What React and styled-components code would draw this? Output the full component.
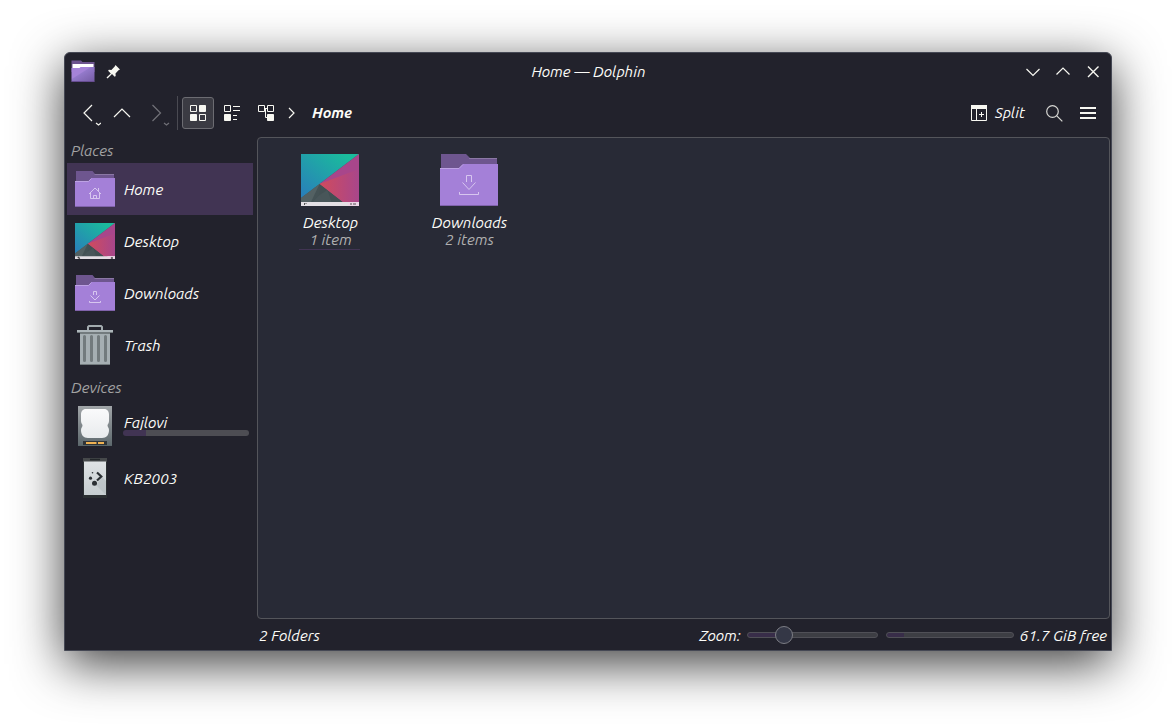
import React from 'react';
import styled, { createGlobalStyle } from 'styled-components';

const GlobalStyle = createGlobalStyle`
  * {
    box-sizing: border-box;
  }

  body {
    margin: 0;
    background: #fff;
    color: #f8f8f2;
    font: italic 15.33px/18px Ubuntu, 'Noto Sans', sans-serif;
    white-space: nowrap;
    overflow: hidden;
  }

  svg {
    display: block;
    flex: none;
  }
`;

const Desktop = styled.div`
  height: 727px;
  padding: 52px 64px 76px;
`;

const Window = styled.div`
  display: flex;
  flex-direction: column;
  height: 599px;
  border: 1px solid #454854;
  border-radius: 6px 6px 0 0;
  background: #22222c;
  box-shadow: 0 13px 50px rgba(0, 0, 0, 0.76);
`;

const TitleBar = styled.header`
  display: grid;
  grid-template-columns: 1fr auto 1fr;
  align-items: center;
  height: 38px;
  padding: 0 10px 0 6px;
`;

const TitleGroup = styled.div`
  display: flex;
  align-items: center;
  justify-content: ${props => (props.$end ? 'flex-end' : 'flex-start')};
  gap: ${props => (props.$end ? 14 : 11)}px;
`;

const Text = styled.span`
  font-weight: ${props => (props.$bold ? 700 : 400)};
  color: ${props => (props.$muted ? '#a3a3a3' : '#fcfcf8')};
`;

const Title = styled(Text)`
  padding-left: 5px;
`;

const ToolBar = styled.nav`
  display: flex;
  align-items: center;
  height: 44px;
  padding: 0 6px 0 7px;
`;

const ToolButton = styled.div`
  display: flex;
  align-items: center;
  justify-content: center;
  width: ${props => props.$width || 34}px;
  height: 32px;
  border: 1px solid ${props => (props.$active ? '#6c6c72' : 'transparent')};
  border-radius: 3px;
  background: ${props => (props.$active ? '#3b3b43' : 'transparent')};
`;

const Divider = styled.div`
  width: 1px;
  height: 34px;
  margin: 0 4px 0 0;
  background: #4a4a52;
`;

const Location = styled(Text)`
  margin-left: 12px;
  font-size: 15px;
`;

const Spacer = styled.div`
  flex: 1;
`;

const Split = styled.div`
  display: flex;
  align-items: center;
  gap: 8px;
  margin-right: 12px;
`;

const Body = styled.div`
  display: flex;
  flex: 1;
  min-height: 0;
  padding-top: 2px;
`;

const Sidebar = styled.aside`
  width: 192px;
  padding: 5px 4px 0 2px;
`;

const Section = styled.div`
  height: ${props => props.$height}px;
  padding: ${props => props.$top}px 0 0 4px;
`;

const Place = styled.div`
  display: flex;
  align-items: center;
  gap: 9px;
  height: 52px;
  padding: 0 4px 0 8px;
  background: ${props => (props.$selected ? '#413453' : 'transparent')};
`;

const PlaceLabel = styled.div`
  display: flex;
  flex: 1;
  flex-direction: column;
  padding: ${props => (props.$raised ? '0 0 3px' : '2px 0 0')};
`;

const Capacity = styled.div`
  height: 6px;
  margin: -2px 0 -1px -1px;
  border-radius: 3px;
  background: linear-gradient(90deg, #413453 23px, #4d4d53 23px);
`;

const Main = styled.main`
  flex: 1;
  margin-right: 1px;
`;

const FileView = styled.section`
  display: flex;
  align-items: flex-start;
  height: 482px;
  padding: 16px 2px;
  border: 1px solid #54555b;
  border-radius: 4px;
  background: #282a36;
`;

const File = styled.div`
  display: flex;
  flex-direction: column;
  align-items: center;
  width: 139px;
`;

const FileName = styled.div`
  height: 17px;
  margin-top: 8px;
  padding-left: 2px;
`;

const FileInfo = styled.div`
  min-width: 61px;
  height: 19px;
  padding-left: 2px;
  text-align: center;
  border-bottom: 1px solid ${props => (props.$current ? '#413453' : 'transparent')};

  ${Text} {
    color: #b0b0b0;
  }
`;

const StatusBar = styled.footer`
  display: flex;
  align-items: center;
  height: 32px;
  padding: 0 3px 0 2px;
`;

const StatusText = styled(Text)`
  padding-top: 2px;
`;

const Slider = styled.div`
  display: flex;
  align-items: center;
  width: 131px;
  height: 6px;
  margin: 0 8px 0 6px;
  border: 1px solid #505057;
  border-radius: 3px;
  background: linear-gradient(90deg, #382d49 35px, #3d3e44 35px);
`;

const Handle = styled.div`
  width: 18px;
  height: 18px;
  margin-left: 27px;
  border: 1px solid #7c7d84;
  border-radius: 50%;
  background: #343746;
`;

const FreeSpace = styled.div`
  width: 128px;
  height: 6px;
  margin-right: 6px;
  border: 1px solid #505057;
  border-radius: 3px;
  background: linear-gradient(90deg, #382d49 17px, #3d3e44 17px);
`;

const Line = ({ w, h, d, color = '#f8f8f2', stroke = 1.2 }) => (
  <svg width={w} height={h} viewBox={`0 0 ${w} ${h}`} fill="none" stroke={color} strokeWidth={stroke}>
    <path d={d} />
  </svg>
);

const AppIcon = () => (
  <svg width="24" height="24" viewBox="0 0 24 24">
    <defs>
      <linearGradient id="app" x2="1" y2="1">
        <stop stopColor="#a583d8" />
        <stop offset=".4" stopColor="#a583d8" />
        <stop offset=".44" stopColor="#9379ca" />
        <stop offset="1" stopColor="#755ca4" />
      </linearGradient>
    </defs>
    <path d="M.5 0.500H10l1.500 1.500h12v10H.5z" fill="#6d548f" />
    <path d="M1.500 4h21v6h-21z" fill="#fff" />
    <path d="M.5 8h8l1-1h14v14.500H.5z" fill="url(#app)" />
    <path d="M.5 21.500h23" stroke="#674d91" />
  </svg>
);

const PinIcon = () => (
  <svg width="14" height="14" viewBox="0 0 14 14">
    <path
      d="M9.500 0L14 4.500l-1.500.8-3 3.200.2 2.500-1 .8-2.700-2.700-4.500 4.400-1-1 4.300-4L2.100 5.800l.8-1 2.500.2L8.700 1.500z"
      fill="#f8f8f2"
    />
  </svg>
);

const Folder = ({ large, glyph }) => {
  if (large) {
    return (
      <svg width="58" height="52" viewBox="0 0 58 52" fill="none">
        <path d="M1 0h25l4 4h27v12H1z" fill="#6e568f" />
        <path d="M29 4.500h28" stroke="#8b78a5" />
        <path d="M0 14h19l4-4h35v42H0z" fill="#a480d8" />
        <path d="M0 14.500h19l4-4" stroke="#bda2e4" />
        <path d="M0 51.500h58" stroke="#8063ab" />
        <path
          d="M26.500 28v-6.500h5V28M22.500 28.500l6.500 7 6.500-7M19.500 38v2.500h19V38"
          stroke="#d7c6ef"
        />
      </svg>
    );
  }
  return (
    <svg width="40" height="36" viewBox="0 0 40 36" fill="none">
      <path d="M1 0h16.500L20 3h19v8H1z" fill="#6e568f" />
      <path d="M19.500 3.500H39" stroke="#8b78a5" />
      <path d="M0 10h13.500l3-3H40v29H0z" fill="#a480d8" />
      <path d="M0 10.500h13.500l3-3" stroke="#bda2e4" />
      <path d="M0 35.500h40" stroke="#8063ab" />
      {glyph === 'home' ? (
        <path d="M14 23l6-6 6 6M15.500 22v5.500h9V22M18.500 27.500v-3h3v3M23.500 17v3" stroke="#d7c6ef" />
      ) : (
        <path d="M18.500 20v-3.500h3V20M15.500 20.500l4.500 4.500 4.500-4.500M14.500 26v1.500h11V26" stroke="#d7c6ef" />
      )}
    </svg>
  );
};

const Wallpaper = ({ width, height }) => (
  <svg width={width} height={height} viewBox="0 0 58 52" preserveAspectRatio="none">
    <defs>
      <linearGradient id="sky" x1="0" y1=".9" x2=".85" y2=".1">
        <stop stopColor="#2980b9" />
        <stop offset="1" stopColor="#1abc9c" />
      </linearGradient>
      <linearGradient id="red">
        <stop stopColor="#d14b5c" />
        <stop offset="1" stopColor="#a8468b" />
      </linearGradient>
    </defs>
    <path d="M0 0h58v52H0z" fill="#445255" />
    <path d="M0 0h58L18.500 30 0 44z" fill="url(#sky)" />
    <path d="M58 0v52H47L18.500 30z" fill="#a8468b" />
    <path d="M58 15v37H47L18.500 30z" fill="url(#red)" />
    <path d="M18.500 30L0 44v4h10z" fill="#536163" />
    <path d="M18.500 30v11l6 7h17z" fill="#425053" />
    <path d="M18.500 41l8-5 4 12H12z" fill="#4d5a5d" opacity=".6" />
    <path d="M0 48h58v4H0z" fill="#e3dfe4" />
    <path d="M47 48h11v4H47z" fill="#ecd6e6" />
    {width > 40 ? (
      <path d="M3.500 49v2M5 49v1M49 50h2M52 50h3" fill="none" stroke="#555" />
    ) : (
      <path d="M4 49l3 2.500M52 50.500h3" fill="none" stroke="#444" strokeWidth="2" />
    )}
  </svg>
);

const TrashIcon = () => (
  <svg width="40" height="40" viewBox="0 0 40 40" fill="none">
    <path d="M13 6V2l1-1h12l1 1v4" stroke="#a2abaf" strokeWidth="2" />
    <path d="M5 8h30v32H5z" fill="#a5aeb2" />
    <path d="M5 8.500h30M5 39.500h30" stroke="#737b7e" />
    <path d="M2 5h36v2H2z" fill="#adb6ba" />
    <path d="M2 7.500h36" stroke="#727a7d" />
    <path
      d="M9.500 11.500v24M16.500 11.500v24M23.500 11.500v24M30.500 11.500v24"
      stroke="#727a7d"
      strokeWidth="3"
      strokeLinecap="round"
    />
  </svg>
);

const DiskIcon = () => (
  <svg width="40" height="40" viewBox="0 0 40 40">
    <defs>
      <linearGradient id="metal" x2="0" y2="1">
        <stop stopColor="#a1a5a8" />
        <stop offset="1" stopColor="#5d686c" />
      </linearGradient>
      <linearGradient id="plate" x2="0" y2="1">
        <stop stopColor="#fafafb" />
        <stop offset="1" stopColor="#e8ebed" />
      </linearGradient>
    </defs>
    <path d="M3 0h34v40H3z" fill="url(#metal)" />
    <path
      d="M11 3h18c3.500 0 5 2.500 5 5.500V15c0 2.500-1.500 3-1.500 4.500S34 21.500 34 24c0 5-2.500 8-7 8H13c-4.500 0-7-3-7-8 0-2.500 1.500-3 1.500-4.500S6 17.500 6 15V8.500C6 5.500 7.500 3 11 3z"
      fill="url(#plate)"
    />
    <path d="M8 35h24v4H8z" fill="#2f3438" />
    <path d="M11 37h10.500M23 37h6" stroke="#f0b252" strokeWidth="1.800" />
    <path d="M3 39.500h34" stroke="#59666a" />
  </svg>
);

const PhoneIcon = () => (
  <svg width="40" height="40" viewBox="0 0 40 40">
    <defs>
      <linearGradient id="screen" x2="0" y2="1">
        <stop stopColor="#dfe3e5" />
        <stop offset="1" stopColor="#c6cdd0" />
      </linearGradient>
    </defs>
    <path d="M8 0h24v40H8z" fill="#2b2f32" />
    <path d="M8 0h24v4H8z" fill="#46494b" />
    <path d="M15 1.500h10" stroke="#222629" strokeWidth="1.500" />
    <path d="M9 3.500h22V37H9z" fill="url(#screen)" />
    <path d="M21 27l9 9h1V23l-4-4z" fill="#b3babe" opacity=".6" />
    <circle cx="15.500" cy="20.200" r="1.600" fill="#2b3034" />
    <circle cx="19.500" cy="25.300" r="2.500" fill="#2b3034" />
    <circle cx="17.500" cy="14.800" r=".8" fill="#2b3034" />
    <path d="M22 14.500l4.300 4-4.300 4" fill="none" stroke="#2b3034" strokeWidth="2.200" />
  </svg>
);

const GridIcon = () => (
  <svg width="16" height="16" viewBox="0 0 16 16" fill="none" stroke="#f8f8f2">
    <path d="M.5.5h6v6h-6zM9.500 9.500h6v6h-6z" />
    <path d="M9.500.5h6v6h-6zM.5 9.500h6v6h-6z" fill="#f8f8f2" />
  </svg>
);

const DetailsIcon = () => (
  <svg width="16" height="16" viewBox="0 0 16 16" fill="none" stroke="#f8f8f2">
    <path d="M.5.5h6v6h-6zM9 1.500h7M9 5.500h7M9 10.500h4M9 14.500h4" />
    <path d="M.5 9.500h6v6h-6z" fill="#f8f8f2" />
  </svg>
);

const TreeIcon = () => (
  <svg width="16" height="16" viewBox="0 0 16 16" fill="none" stroke="#f8f8f2">
    <path d="M.5.5h6v6h-6zM9.500.5h6v6h-6zM6 3.500h4M7.500 3v9.500H10" />
    <path d="M9.500 9.500h6v6h-6z" fill="#f8f8f2" />
  </svg>
);

const SplitIcon = () => (
  <svg width="16" height="16" viewBox="0 0 16 16" fill="none" stroke="#f8f8f2">
    <path d="M.5.5h15v15H.5zM5.500 3v13M8 9.500h5M10.500 7v5" />
    <path d="M0 0h16v4H0z" fill="#f8f8f2" stroke="none" />
  </svg>
);

const SearchIcon = () => (
  <svg width="17" height="17" viewBox="0 0 17 17" fill="none" stroke="#d8d8d4" strokeWidth="1.200">
    <circle cx="6.500" cy="6.500" r="5.800" />
    <path d="M10.800 10.800l5.500 5.500" />
  </svg>
);

const places = [
  { name: 'Home', icon: <Folder glyph="home" />, selected: true },
  { name: 'Desktop', icon: <Wallpaper width={40} height={36} /> },
  { name: 'Downloads', icon: <Folder /> },
  { name: 'Trash', icon: <TrashIcon /> },
];

const devices = [
  { name: 'Fajlovi', icon: <DiskIcon />, capacity: true },
  { name: 'KB2003', icon: <PhoneIcon /> },
];

const PlaceRow = ({ name, icon, selected, capacity }) => (
  <Place $selected={selected}>
    {icon}
    <PlaceLabel $raised={capacity}>
      <Text>{name}</Text>
      {capacity && <Capacity />}
    </PlaceLabel>
  </Place>
);

const App = () => (
  <Desktop>
    <GlobalStyle />
    <Window>
      <TitleBar>
        <TitleGroup>
          <AppIcon />
          <PinIcon />
        </TitleGroup>
        <Title>Home — Dolphin</Title>
        <TitleGroup $end>
          <Line w={16} h={16} d="M1.500 5l6.500 6.500L14.500 5" />
          <Line w={16} h={16} d="M1.500 10.500L8 4l6.500 6.500" />
          <Line w={16} h={16} d="M3 2.500l10.500 10.500M13.500 2.500L3 13" stroke={1.4} />
        </TitleGroup>
      </TitleBar>
      <ToolBar>
        <ToolButton>
          <Line w={24} h={28} d="M15 6l-8 8 8 8M19 24l2.500 2 2.500-2" />
        </ToolButton>
        <ToolButton $width={32}>
          <Line w={18} h={18} d="M1 13l8-8 8 8" />
        </ToolButton>
        <ToolButton $width={39}>
          <Line w={24} h={28} d="M6.500 6l8 8-8 8M18 24l2.500 2 2.500-2" color="#717178" />
        </ToolButton>
        <Divider />
        <ToolButton $width={32} $active>
          <GridIcon />
        </ToolButton>
        <ToolButton $width={36}>
          <DetailsIcon />
        </ToolButton>
        <ToolButton $width={32}>
          <TreeIcon />
        </ToolButton>
        <ToolButton $width={18}>
          <Line w={8} h={12} d="M2 1l5 5-5 5" />
        </ToolButton>
        <Location $bold>Home</Location>
        <Spacer />
        <Split>
          <SplitIcon />
          <Text>Split</Text>
        </Split>
        <ToolButton>
          <SearchIcon />
        </ToolButton>
        <ToolButton>
          <Line w={16} h={14} d="M0 2h16M0 7h16M0 12h16" stroke={2} />
        </ToolButton>
      </ToolBar>
      <Body>
        <Sidebar>
          <Section $height={21} $top={0}>
            <Text $muted>Places</Text>
          </Section>
          {places.map(place => (
            <PlaceRow key={place.name} {...place} />
          ))}
          <Section $height={29} $top={8}>
            <Text $muted>Devices</Text>
          </Section>
          {devices.map(device => (
            <PlaceRow key={device.name} {...device} />
          ))}
        </Sidebar>
        <Main>
          <FileView>
            <File>
              <Wallpaper width={58} height={52} />
              <FileName>
                <Text>Desktop</Text>
              </FileName>
              <FileInfo $current>
                <Text>1 item</Text>
              </FileInfo>
            </File>
            <File>
              <Folder large />
              <FileName>
                <Text>Downloads</Text>
              </FileName>
              <FileInfo>
                <Text>2 items</Text>
              </FileInfo>
            </File>
          </FileView>
          <StatusBar>
            <StatusText>2 Folders</StatusText>
            <Spacer />
            <StatusText>Zoom:</StatusText>
            <Slider>
              <Handle />
            </Slider>
            <FreeSpace />
            <StatusText>61.7 GiB free</StatusText>
          </StatusBar>
        </Main>
      </Body>
    </Window>
  </Desktop>
);

export default App;
